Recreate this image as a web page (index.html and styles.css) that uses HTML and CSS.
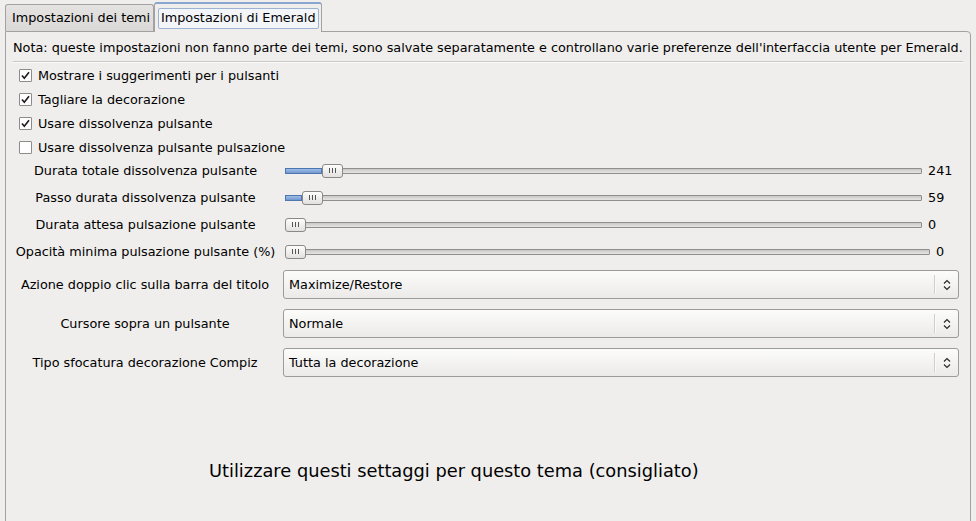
FILE: index.html
```html
<!DOCTYPE html>
<html lang="it">
<head>
<meta charset="utf-8">
<link rel="stylesheet" href="styles.css">
</head>
<body>
<div class="tabs">
  <div class="tab">Impostazioni dei temi</div>
  <div class="tab active"><span class="focus">Impostazioni di Emerald</span></div>
</div>
<div class="panel">
  <div class="note">Nota: queste impostazioni non fanno parte dei temi, sono salvate separatamente e controllano varie preferenze dell'interfaccia utente per Emerald.</div>
  <div class="sep"></div>
  <div class="checks">
    <label class="check"><span class="box"><svg viewBox="0 0 13 13" width="13" height="13"><path d="M3 6.5 L5.3 9.3 L10 3.2" fill="none" stroke="#1a1a1a" stroke-width="1.6"/></svg></span>Mostrare i suggerimenti per i pulsanti</label>
    <label class="check"><span class="box"><svg viewBox="0 0 13 13" width="13" height="13"><path d="M3 6.5 L5.3 9.3 L10 3.2" fill="none" stroke="#1a1a1a" stroke-width="1.6"/></svg></span>Tagliare la decorazione</label>
    <label class="check"><span class="box"><svg viewBox="0 0 13 13" width="13" height="13"><path d="M3 6.5 L5.3 9.3 L10 3.2" fill="none" stroke="#1a1a1a" stroke-width="1.6"/></svg></span>Usare dissolvenza pulsante</label>
    <label class="check"><span class="box"></span>Usare dissolvenza pulsante pulsazione</label>
  </div>
  <div class="sliders">
    <div class="srow">
      <span class="slabel">Durata totale dissolvenza pulsante</span>
      <span class="track"><span class="fill" style="width:37px"></span><span class="knob"><i></i><i></i><i></i></span></span>
      <span class="val">241</span>
    </div>
    <div class="srow">
      <span class="slabel">Passo durata dissolvenza pulsante</span>
      <span class="track"><span class="fill" style="width:17px"></span><span class="knob"><i></i><i></i><i></i></span></span>
      <span class="val">59</span>
    </div>
    <div class="srow">
      <span class="slabel">Durata attesa pulsazione pulsante</span>
      <span class="track"><span class="knob"><i></i><i></i><i></i></span></span>
      <span class="val">0</span>
    </div>
    <div class="srow wide">
      <span class="slabel">Opacità minima pulsazione pulsante (%)</span>
      <span class="track"><span class="knob"><i></i><i></i><i></i></span></span>
      <span class="val">0</span>
    </div>
  </div>
  <div class="combos">
    <div class="crow">
      <span class="clabel">Azione doppio clic sulla barra del titolo</span>
      <div class="combo"><span class="ctext">Maximize/Restore</span><span class="cdiv"></span><svg class="arrows" viewBox="0 0 8 12" width="8" height="12"><path d="M1 4.5 L4 1.5 L7 4.5 M1 7.5 L4 10.5 L7 7.5" fill="none" stroke="#2a2a2a" stroke-width="1.2"/></svg></div>
    </div>
    <div class="crow">
      <span class="clabel">Cursore sopra un pulsante</span>
      <div class="combo"><span class="ctext">Normale</span><span class="cdiv"></span><svg class="arrows" viewBox="0 0 8 12" width="8" height="12"><path d="M1 4.5 L4 1.5 L7 4.5 M1 7.5 L4 10.5 L7 7.5" fill="none" stroke="#2a2a2a" stroke-width="1.2"/></svg></div>
    </div>
    <div class="crow">
      <span class="clabel">Tipo sfocatura decorazione Compiz</span>
      <div class="combo"><span class="ctext">Tutta la decorazione</span><span class="cdiv"></span><svg class="arrows" viewBox="0 0 8 12" width="8" height="12"><path d="M1 4.5 L4 1.5 L7 4.5 M1 7.5 L4 10.5 L7 7.5" fill="none" stroke="#2a2a2a" stroke-width="1.2"/></svg></div>
    </div>
  </div>
  <div class="footer">Utilizzare questi settaggi per questo tema (consigliato)</div>
</div>
</body>
</html>
```
FILE: styles.css
```css
html, body {
  margin: 0;
  padding: 0;
  background: #efeeec;
  overflow: hidden;
}
body {
  font-family: "DejaVu Sans", "Liberation Sans", sans-serif;
  font-size: 12.8px;
  color: #000;
  width: 976px;
  height: 521px;
}
.tabs {
  display: flex;
  align-items: flex-end;
  padding-left: 5px;
  padding-top: 3px;
  height: 28px;
  position: relative;
  z-index: 2;
}
.tab {
  box-sizing: border-box;
  height: 27px;
  width: 149px;
  padding: 5px 0 0 6px;
  border: 1px solid #a3a2a0;
  border-bottom: none;
  border-radius: 3px 3px 0 0;
  background: linear-gradient(#e4e3e1, #dad9d7);
  white-space: nowrap;
}
.tab.active {
  height: 30px;
  width: 168px;
  padding: 4px 0 0 3px;
  background: #efeeec;
  border-color: #a3a2a0;
  border-top: 2px solid #8aa6cf;
  margin-bottom: -1px;
}
.focus {
  display: inline-block;
  border: 1px solid #9db3d2;
  border-radius: 2px;
  padding: 2px 2px 3px 2px;
  background: #f3f5f8;
  line-height: 14px;
}
.panel {
  box-sizing: border-box;
  margin-left: 5px;
  width: 966px;
  height: 600px;
  border: 1px solid #a3a2a0;
  border-radius: 0 4px 0 0;
  padding: 8px 7px 0 7px;
}
.note {
  line-height: 15px;
  white-space: nowrap;
}
.sep {
  height: 1px;
  background: #c9c8c6;
  margin: 6px 0 0 0;
  border-bottom: 1px solid #fbfbfa;
}
.checks {
  display: flex;
  flex-direction: column;
}
.check {
  display: flex;
  align-items: center;
  height: 24px;
  padding-left: 6px;
}
.box {
  box-sizing: border-box;
  width: 13px;
  height: 13px;
  border: 1px solid #8d8c8a;
  border-radius: 1px;
  background: #fff;
  margin-right: 6px;
  position: relative;
}
.box svg {
  position: absolute;
  left: -1px;
  top: -1px;
}
.sliders {
  display: flex;
  flex-direction: column;
  margin-top: -2px;
}
.srow {
  display: grid;
  grid-template-columns: 264px 639px auto;
  column-gap: 6px;
  align-items: center;
  height: 27px;
}
.srow.wide {
  grid-template-columns: 264px 647px auto;
}
.slabel {
  text-align: center;
  white-space: nowrap;
  margin-left: 1px;
}
.track {
  position: relative;
  box-sizing: border-box;
  height: 6px;
  border: 1px solid #8f8e8c;
  border-radius: 1px;
  background: linear-gradient(#c9c8c6, #e6e5e3);
  margin-left: 2px;
}
.fill {
  position: absolute;
  left: -1px;
  top: -1px;
  height: 6px;
  box-sizing: border-box;
  border: 1px solid #4e77b0;
  background: linear-gradient(#9dbde6, #7199cf);
}
.knob {
  position: absolute;
  top: -5px;
  box-sizing: border-box;
  width: 21px;
  height: 14px;
  border: 1px solid #8a8987;
  border-radius: 3px;
  background: linear-gradient(#fdfdfc, #e2e1df);
  display: flex;
  justify-content: center;
  align-items: center;
  gap: 2px;
}
.srow:nth-child(1) .knob { left: 36px; }
.srow:nth-child(2) .knob { left: 16px; }
.srow:nth-child(3) .knob, .srow:nth-child(4) .knob { left: -1px; }
.knob i {
  display: block;
  width: 1px;
  height: 5px;
  background: #555;
}
.val {
  white-space: nowrap;
}
.combos {
  display: flex;
  flex-direction: column;
  margin-top: 5px;
  gap: 10px;
}
.crow {
  display: grid;
  grid-template-columns: 264px 676px;
  column-gap: 6px;
  align-items: center;
}
.clabel {
  text-align: center;
  white-space: nowrap;
}
.combo {
  box-sizing: border-box;
  height: 29px;
  border: 1px solid #9c9b99;
  border-radius: 3px;
  background: linear-gradient(#fcfcfb, #ebeae8);
  display: flex;
  align-items: center;
  padding-left: 5px;
}
.ctext {
  flex: 1;
  white-space: nowrap;
}
.cdiv {
  width: 1px;
  height: 19px;
  background: #cfcecc;
  border-right: 1px solid #fafafa;
  margin-right: 7px;
}
.arrows {
  margin-right: 7px;
}
.footer {
  font-size: 17.8px;
  margin-top: 83px;
  padding-left: 196px;
  white-space: nowrap;
}
```
